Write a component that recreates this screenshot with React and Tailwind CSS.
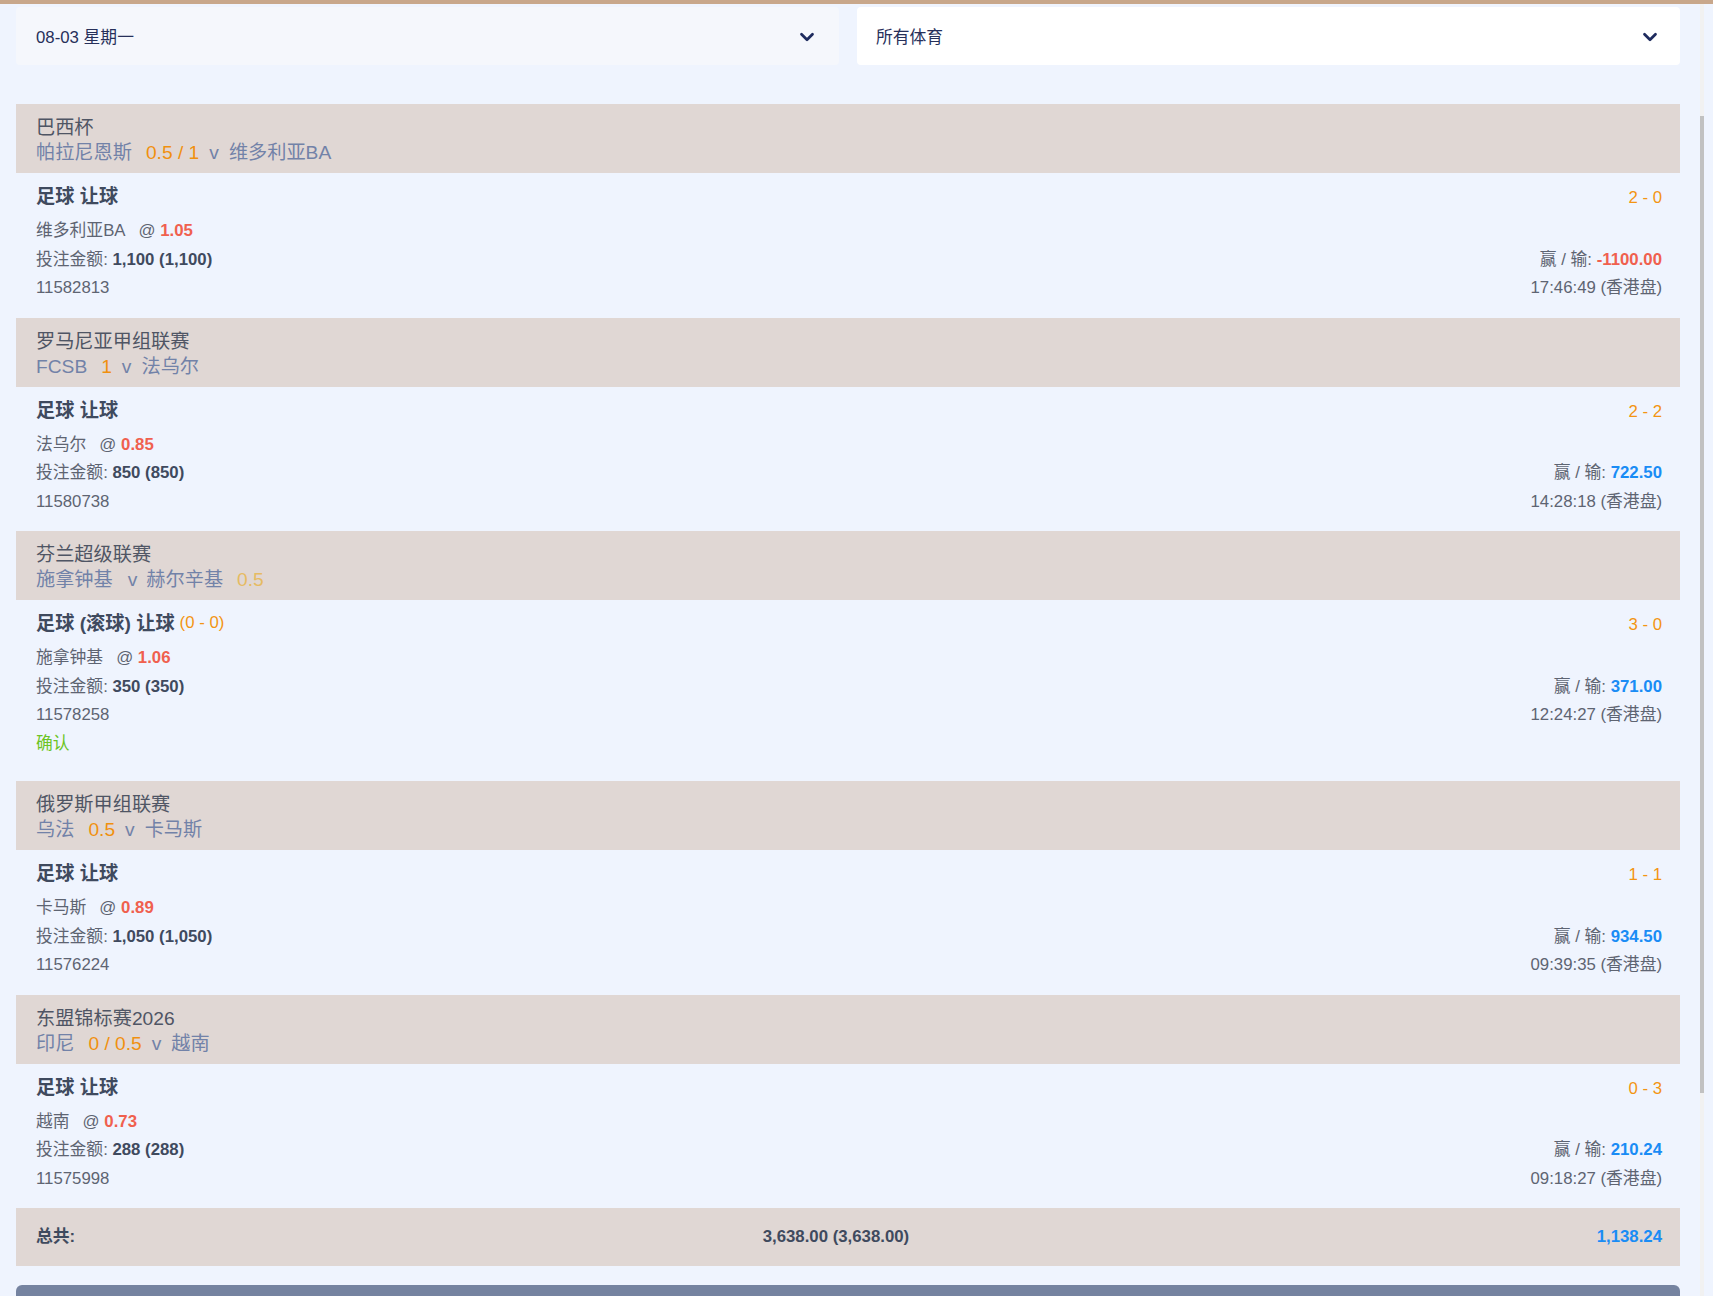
import React from "react";
import { ChevronDown } from "lucide-react";

const bets = [
  {
    league: "巴西杯",
    home: "帕拉尼恩斯",
    away: "维多利亚BA",
    hdp: "0.5 / 1",
    hdpSide: "home",
    market: "足球 让球",
    pick: "维多利亚BA",
    odds: "1.05",
    stake: "1,100 (1,100)",
    ticket: "11582813",
    score: "2 - 0",
    winLoss: "-1100.00",
    time: "17:46:49",
  },
  {
    league: "罗马尼亚甲组联赛",
    home: "FCSB",
    away: "法乌尔",
    hdp: "1",
    hdpSide: "home",
    market: "足球 让球",
    pick: "法乌尔",
    odds: "0.85",
    stake: "850 (850)",
    ticket: "11580738",
    score: "2 - 2",
    winLoss: "722.50",
    time: "14:28:18",
  },
  {
    league: "芬兰超级联赛",
    home: "施拿钟基",
    away: "赫尔辛基",
    hdp: "0.5",
    hdpSide: "away",
    market: "足球 (滚球) 让球",
    liveScore: "(0 - 0)",
    pick: "施拿钟基",
    odds: "1.06",
    stake: "350 (350)",
    ticket: "11578258",
    score: "3 - 0",
    winLoss: "371.00",
    time: "12:24:27",
    status: "确认",
  },
  {
    league: "俄罗斯甲组联赛",
    home: "乌法",
    away: "卡马斯",
    hdp: "0.5",
    hdpSide: "home",
    market: "足球 让球",
    pick: "卡马斯",
    odds: "0.89",
    stake: "1,050 (1,050)",
    ticket: "11576224",
    score: "1 - 1",
    winLoss: "934.50",
    time: "09:39:35",
  },
  {
    league: "东盟锦标赛2026",
    home: "印尼",
    away: "越南",
    hdp: "0 / 0.5",
    hdpSide: "home",
    market: "足球 让球",
    pick: "越南",
    odds: "0.73",
    stake: "288 (288)",
    ticket: "11575998",
    score: "0 - 3",
    winLoss: "210.24",
    time: "09:18:27",
  },
];

function Select({ label, muted }) {
  return (
    <div
      className={
        "h-[58px] rounded-[4px] flex items-center justify-between text-[16.8px] text-[#27305a] " +
        (muted ? "bg-[#f5f7fc] pl-[20px] pr-[21px]" : "bg-white pl-[19px] pr-[19px]")
      }
    >
      <span className="mt-[4px]">{label}</span>
      <ChevronDown size={22} strokeWidth={3} className="mt-[2px] text-[#1e2b5e]" />
    </div>
  );
}

function MatchHeader({ bet }) {
  const homeHdp = bet.hdpSide === "home";
  return (
    <div className="h-[69px] bg-[#e0d7d4] pl-[20px] pr-[18px] pt-[11px] text-[19.2px] leading-[25px]">
      <div className="h-[25px] text-[#4f5564]">{bet.league}</div>
      <div className="h-[25px] text-[#7282a8] flex items-baseline">
        <span>{bet.home}</span>
        {homeHdp && <span className="ml-[14px] text-[#f0900f]">{bet.hdp}</span>}
        <span className={homeHdp ? "ml-[10px] mr-[10px]" : "ml-[15px] mr-[9px]"}>v</span>
        <span>{bet.away}</span>
        {!homeHdp && <span className="ml-[14px] text-[#e6bb62]">{bet.hdp}</span>}
      </div>
    </div>
  );
}

function BetBody({ bet }) {
  const won = !bet.winLoss.startsWith("-");
  return (
    <div className="pl-[20px] pr-[18px] pt-[11px] pb-[15px] text-[16.8px] text-[#5e6472]">
      <div className="h-[25px] flex justify-between items-baseline leading-[25px]">
        <div className="text-[19.2px] font-bold text-[#3f4a5e]">
          {bet.market}
          {bet.liveScore && (
            <span className="ml-[5px] text-[16.8px] font-normal text-[#f39412] relative -top-[2px]">
              {bet.liveScore}
            </span>
          )}
        </div>
        <div className="text-[#f39412]">{bet.score}</div>
      </div>
      <div className="mt-[8px] leading-[28.5px]">
        <div className="h-[28.5px]">
          {bet.pick}
          <span className="ml-[13px]">@</span>{" "}
          <span className="font-bold text-[#f0604e]">{bet.odds}</span>
        </div>
        <div className="h-[28.5px] flex justify-between">
          <div>
            投注金额: <span className="font-bold text-[#3f4a5e]">{bet.stake}</span>
          </div>
          <div>
            赢 / 输:{" "}
            <span className={"font-bold " + (won ? "text-[#1a8cf5]" : "text-[#f0604e]")}>
              {bet.winLoss}
            </span>
          </div>
        </div>
        <div className="h-[28.5px] flex justify-between">
          <div>{bet.ticket}</div>
          <div>{bet.time} (香港盘)</div>
        </div>
        {bet.status && <div className="h-[28.5px] mb-[8px] text-[#6cc424]">{bet.status}</div>}
      </div>
    </div>
  );
}

export default function App() {
  return (
    <div className="relative h-[1296px] overflow-hidden bg-[#eff4fe] font-['Liberation_Sans','Noto_Sans_CJK_SC',sans-serif]">
      <div className="h-[4px] bg-[#c8a78b]" />

      <div className="pl-[16px] pr-[33px]">
        <div className="pt-[3px] grid grid-cols-2 gap-[18px]">
          <Select label="08-03 星期一" muted />
          <Select label="所有体育" />
        </div>

        <div className="mt-[39px]">
          {bets.map((bet) => (
            <div key={bet.ticket}>
              <MatchHeader bet={bet} />
              <BetBody bet={bet} />
            </div>
          ))}

          <div className="h-[58px] bg-[#e0d7d4] flex items-center pl-[20px] pr-[18px] text-[16.8px] font-bold text-[#3f4a5e]">
            <div>总共:</div>
            <div className="flex-1 text-center">3,638.00 (3,638.00)</div>
            <div className="text-[#1a8cf5]">1,138.24</div>
          </div>

          <div className="mt-[19px] h-[40px] rounded-t-[6px] bg-[#7583a0]" />
        </div>
      </div>

      {/* thin scrollbar */}
      <div className="absolute right-[9px] top-[4px] bottom-0 w-[4px] bg-[#f1f1f1]">
        <div className="mt-[112px] h-[977px] bg-[#c1c1c1]" />
      </div>
    </div>
  );
}
